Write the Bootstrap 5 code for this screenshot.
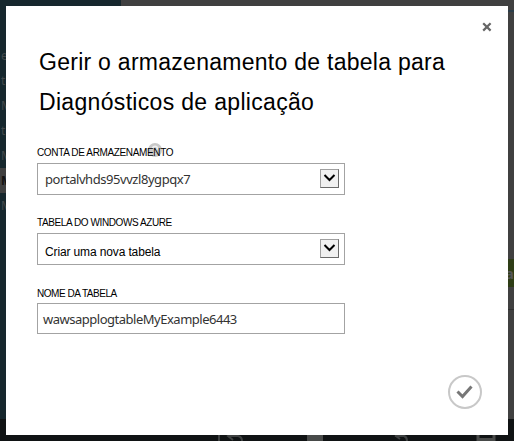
<!DOCTYPE html>
<html lang="pt">
<head>
<meta charset="utf-8">
<meta name="viewport" content="width=device-width, initial-scale=1">
<title>Gerir o armazenamento de tabela</title>
<link href="https://cdn.jsdelivr.net/npm/bootstrap@5.3.0/dist/css/bootstrap.min.css" rel="stylesheet">
<style>
body{width:514px;height:441px;background:#404040;font-family:"Liberation Sans",Arial,sans-serif;color:#000}
.portal{height:441px}
.portal-main{height:419px}
.side{width:121px;background:#16272d;font:12px/25px "Noto Sans",sans-serif;color:#43494b;padding-top:43px}
.side div{height:25px;padding-left:1px}
.side .current{background:#404040;color:#111;font-weight:700}
.work .rule{height:2px;background:#2b3d49;margin-top:10px}
.work .add{height:28px;background:#2e3d16;margin-top:247px;width:10px;color:#555;font:700 15px/28px "Noto Sans",sans-serif;direction:rtl}
.work .rule2{height:1px;background:#303030;margin-top:22px}
.cmdbar{height:22px;background:#101314}
.dialog{left:6px;top:6px;width:502px;height:429px;padding:0 31px}
.dismiss{right:16px;top:16px;width:10px;height:10px}
h1{font-size:23px;line-height:40px;margin:0;padding:36px 0 0 2px;font-weight:400}
.t1{letter-spacing:.27px}
.t2{letter-spacing:.32px}
.group1{margin-top:25px}
.group2{margin-top:22px}
.group3{margin-top:23px}
.cap{font-size:10px;line-height:12px;height:12px;margin-bottom:4px}
.group3 .cap{margin-bottom:3px}
.c1{letter-spacing:-.36px}
.c2{letter-spacing:-.41px}
.c3{letter-spacing:-.47px}
.field{width:308px;height:32px;border:1px solid #a3a3a3;font-size:13px;color:#333;padding:0 5px 0 7px}
.segoe{font-family:"Noto Sans","Open Sans",sans-serif}
.v1{letter-spacing:-.44px;padding-top:1px}
.v2{color:#000;font-size:12px;letter-spacing:-.13px;padding-top:5px}
.v3{letter-spacing:-.49px;padding-top:2px}
.name{height:31px;padding-left:5px}
.drop{width:19px;height:19px;background:#f0f0f0;border:1px solid #a0a0a0;border-right-color:#696969;border-bottom-color:#696969;margin-bottom:1px}
.help{left:111px;top:-4px;width:14px;height:14px}
.confirm{right:25px;bottom:25px;width:36px;height:36px}
svg{display:block}
</style>
<script src="https://cdn.jsdelivr.net/npm/bootstrap@5.3.0/dist/js/bootstrap.bundle.min.js"></script>
</head>
<body class="position-relative overflow-hidden">
<div class="portal d-flex flex-column" aria-hidden="true">
  <div class="portal-main d-flex">
    <div class="side"><div>e</div><div>to</div><div>M</div><div>to</div><div>M</div><div class="current">M</div><div>M</div></div>
    <div class="work flex-fill d-flex flex-column"><div class="rule"></div><div class="add align-self-end overflow-hidden">a</div><div class="rule2"></div></div>
  </div>
  <div class="cmdbar">
    <svg width="514" height="22" fill="none" stroke="#3d4040" stroke-width="2"><path d="M219 14v8M228 17h10q4 1 4 5M233 13l-5 4 5 4M395 17h9q3 1 3 5M399 15l-3 2 4 3" /><path d="M478 14v6.500h16V14" stroke="#484a49" stroke-width="3"/><path d="M307 14h16v8h-16z" fill="#484a49" stroke="none"/></svg>
  </div>
</div>
<main class="dialog bg-white position-absolute" role="dialog">
  <button class="dismiss position-absolute border-0 bg-transparent p-0" aria-label="Fechar"><svg width="10" height="10" stroke="#666" stroke-width="2.2"><path d="M1.2 1.2l7.4 7.4M8.6 1.2L1.2 8.6"/></svg></button>
  <h1><span class="t1 d-block text-nowrap">Gerir o armazenamento de tabela para</span><span class="t2 d-block text-nowrap">Diagnósticos de aplicação</span></h1>
  <form class="d-flex flex-column">
    <div class="group1 position-relative">
      <svg class="help position-absolute" viewBox="0 0 14 14"><circle cx="7" cy="7" r="7" fill="#c8c8c8"/><path d="M4.5 5.5Q4.8 3.3 7 3.3t2.4 2Q9.3 6.5 7 8v1M7 10v1.5" fill="none" stroke="#eee" stroke-width="1.6"/></svg>
      <div class="cap position-relative"><span class="c1">CONTA DE ARMAZENAMENTO</span></div>
      <div class="field d-flex align-items-center justify-content-between segoe"><span class="v1">portalvhds95vvzl8ygpqx7</span><span class="drop"><svg width="17" height="17" fill="none" stroke="#000" stroke-width="2"><path d="M3.500 5l5 5 5-5"/></svg></span></div>
    </div>
    <div class="group2">
      <div class="cap"><span class="c2">TABELA DO WINDOWS AZURE</span></div>
      <div class="field d-flex align-items-center justify-content-between"><span class="v2">Criar uma nova tabela</span><span class="drop"><svg width="17" height="17" fill="none" stroke="#000" stroke-width="2"><path d="M3.500 5l5 5 5-5"/></svg></span></div>
    </div>
    <div class="group3">
      <div class="cap"><span class="c3">NOME DA TABELA</span></div>
      <div class="field name d-flex align-items-center segoe"><span class="v3">wawsapplogtableMyExample6443</span></div>
    </div>
  </form>
  <button class="confirm position-absolute border-0 bg-transparent p-0" aria-label="OK"><svg width="36" height="36" fill="none"><circle cx="18" cy="18" r="16" stroke="#c8c8c8" stroke-width="2"/><path d="M10.500 17.500l5 5 9-10" stroke="#777" stroke-width="3"/></svg></button>
</main>
</body>
</html>
